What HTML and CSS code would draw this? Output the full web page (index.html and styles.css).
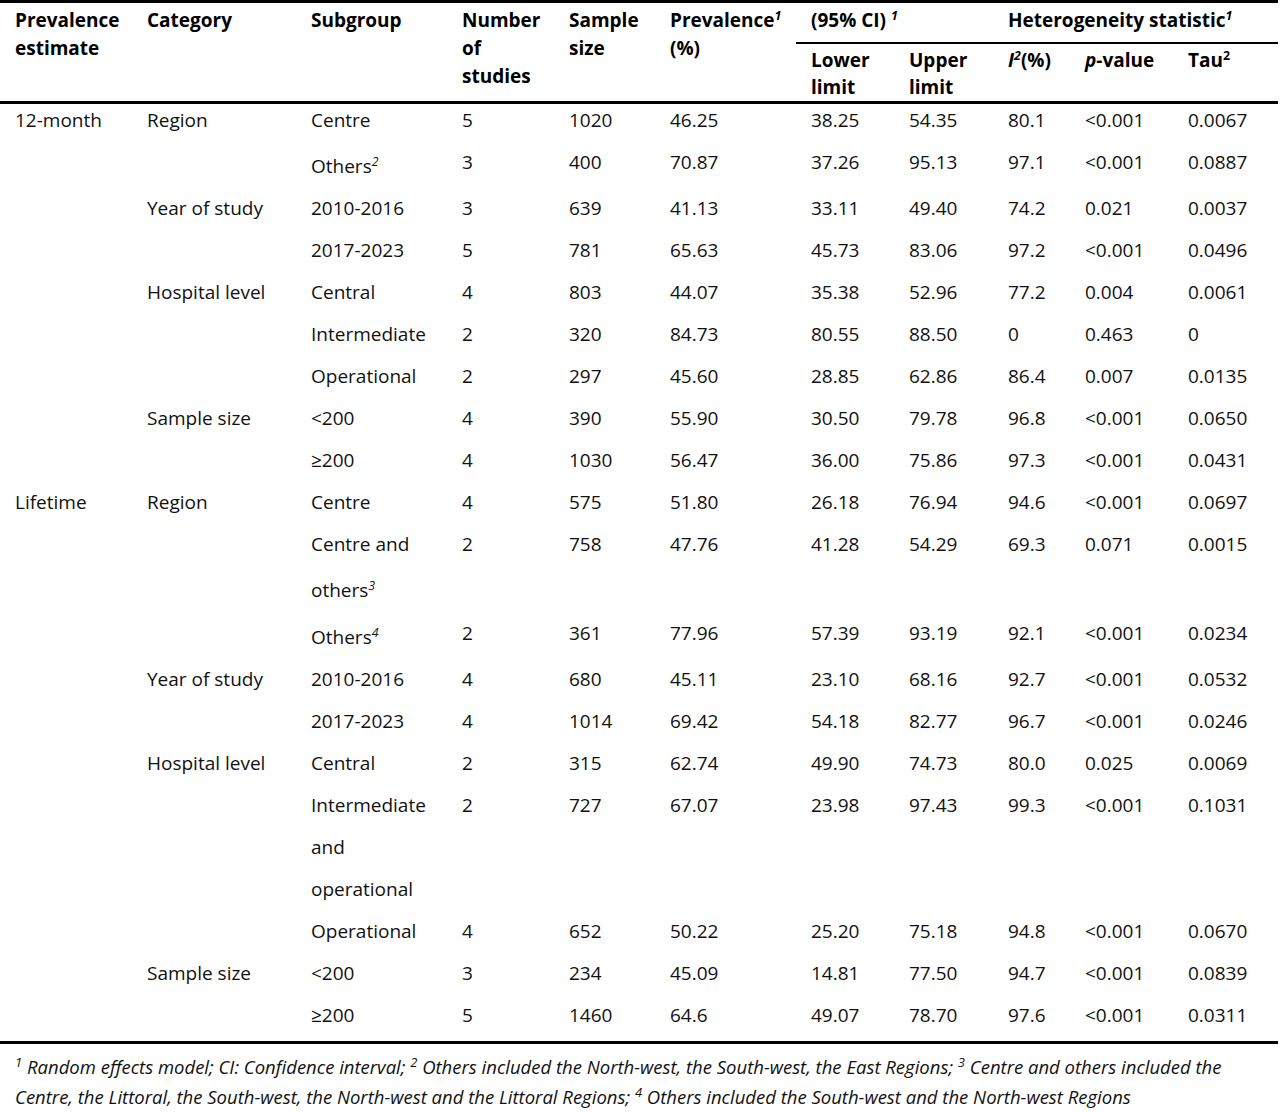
FILE: index.html
```html
<!DOCTYPE html>
<html lang="en">
<head>
    <meta charset="UTF-8">
    <meta name="viewport" content="width=device-width, initial-scale=1.0">
    <title>Subgroup prevalence</title>
    <link rel="stylesheet" href="styles.css">
</head>
<body>
    <table class="prev-table">
        <colgroup>
            <col style="width:132px">
            <col style="width:164px">
            <col style="width:151px">
            <col style="width:107px">
            <col style="width:101px">
            <col style="width:141px">
            <col style="width:98px">
            <col style="width:99px">
            <col style="width:77px">
            <col style="width:103px">
            <col style="width:105px">
        </colgroup>
        <thead>
            <tr class="head-top">
                <th rowspan="2">Prevalence estimate</th>
                <th rowspan="2">Category</th>
                <th rowspan="2">Subgroup</th>
                <th rowspan="2">Number of studies</th>
                <th rowspan="2">Sample size</th>
                <th rowspan="2">Prevalence<sup><i>1</i></sup> (%)</th>
                <th colspan="2" class="group">(95% CI) <sup><i>1</i></sup></th>
                <th colspan="3" class="group">Heterogeneity statistic<sup><i>1</i></sup></th>
            </tr>
            <tr class="head-sub">
                <th>Lower limit</th>
                <th>Upper limit</th>
                <th><i>I</i><sup><i>2</i></sup>(%)</th>
                <th><i>p</i>-value</th>
                <th>Tau<sup>2</sup></th>
            </tr>
        </thead>
        <tbody>
            <tr><td>12-month</td><td>Region</td><td>Centre</td><td>5</td><td>1020</td><td>46.25</td><td>38.25</td><td>54.35</td><td>80.1</td><td>&lt;0.001</td><td>0.0067</td></tr>
            <tr><td></td><td></td><td>Others<sup><i>2</i></sup></td><td>3</td><td>400</td><td>70.87</td><td>37.26</td><td>95.13</td><td>97.1</td><td>&lt;0.001</td><td>0.0887</td></tr>
            <tr><td></td><td>Year of study</td><td>2010-2016</td><td>3</td><td>639</td><td>41.13</td><td>33.11</td><td>49.40</td><td>74.2</td><td>0.021</td><td>0.0037</td></tr>
            <tr><td></td><td></td><td>2017-2023</td><td>5</td><td>781</td><td>65.63</td><td>45.73</td><td>83.06</td><td>97.2</td><td>&lt;0.001</td><td>0.0496</td></tr>
            <tr><td></td><td>Hospital level</td><td>Central</td><td>4</td><td>803</td><td>44.07</td><td>35.38</td><td>52.96</td><td>77.2</td><td>0.004</td><td>0.0061</td></tr>
            <tr><td></td><td></td><td>Intermediate</td><td>2</td><td>320</td><td>84.73</td><td>80.55</td><td>88.50</td><td>0</td><td>0.463</td><td>0</td></tr>
            <tr><td></td><td></td><td>Operational</td><td>2</td><td>297</td><td>45.60</td><td>28.85</td><td>62.86</td><td>86.4</td><td>0.007</td><td>0.0135</td></tr>
            <tr><td></td><td>Sample size</td><td>&lt;200</td><td>4</td><td>390</td><td>55.90</td><td>30.50</td><td>79.78</td><td>96.8</td><td>&lt;0.001</td><td>0.0650</td></tr>
            <tr><td></td><td></td><td>&ge;200</td><td>4</td><td>1030</td><td>56.47</td><td>36.00</td><td>75.86</td><td>97.3</td><td>&lt;0.001</td><td>0.0431</td></tr>
            <tr><td>Lifetime</td><td>Region</td><td>Centre</td><td>4</td><td>575</td><td>51.80</td><td>26.18</td><td>76.94</td><td>94.6</td><td>&lt;0.001</td><td>0.0697</td></tr>
            <tr><td></td><td></td><td><div class="wrap">Centre and others<sup><i>3</i></sup></div></td><td>2</td><td>758</td><td>47.76</td><td>41.28</td><td>54.29</td><td>69.3</td><td>0.071</td><td>0.0015</td></tr>
            <tr><td></td><td></td><td>Others<sup><i>4</i></sup></td><td>2</td><td>361</td><td>77.96</td><td>57.39</td><td>93.19</td><td>92.1</td><td>&lt;0.001</td><td>0.0234</td></tr>
            <tr><td></td><td>Year of study</td><td>2010-2016</td><td>4</td><td>680</td><td>45.11</td><td>23.10</td><td>68.16</td><td>92.7</td><td>&lt;0.001</td><td>0.0532</td></tr>
            <tr><td></td><td></td><td>2017-2023</td><td>4</td><td>1014</td><td>69.42</td><td>54.18</td><td>82.77</td><td>96.7</td><td>&lt;0.001</td><td>0.0246</td></tr>
            <tr><td></td><td>Hospital level</td><td>Central</td><td>2</td><td>315</td><td>62.74</td><td>49.90</td><td>74.73</td><td>80.0</td><td>0.025</td><td>0.0069</td></tr>
            <tr><td></td><td></td><td><div class="wrap">Intermediate and operational</div></td><td>2</td><td>727</td><td>67.07</td><td>23.98</td><td>97.43</td><td>99.3</td><td>&lt;0.001</td><td>0.1031</td></tr>
            <tr><td></td><td></td><td>Operational</td><td>4</td><td>652</td><td>50.22</td><td>25.20</td><td>75.18</td><td>94.8</td><td>&lt;0.001</td><td>0.0670</td></tr>
            <tr><td></td><td>Sample size</td><td>&lt;200</td><td>3</td><td>234</td><td>45.09</td><td>14.81</td><td>77.50</td><td>94.7</td><td>&lt;0.001</td><td>0.0839</td></tr>
            <tr><td></td><td></td><td>&ge;200</td><td>5</td><td>1460</td><td>64.6</td><td>49.07</td><td>78.70</td><td>97.6</td><td>&lt;0.001</td><td>0.0311</td></tr>
        </tbody>
    </table>
    <p class="notes">
        <sup>1</sup> Random effects model; CI: Confidence interval; <sup>2</sup> Others included the North-west, the South-west, the East Regions; <sup>3</sup> Centre and others included the<br>
        Centre, the Littoral, the South-west, the North-west and the Littoral Regions; <sup>4</sup> Others included the South-west and the North-west Regions
    </p>
</body>
</html>
```

FILE: styles.css
```css
*{
    margin: 0;
    padding: 0;
    box-sizing: border-box;
}
body{
    background-color: #fff;
    color: #111;
    font-family: "Open Sans", "Noto Sans", sans-serif;
    font-size: 19px;
}
.prev-table{
    width: 1278px;
    table-layout: fixed;
    border-collapse: collapse;
    border-top: 3px solid #000;
    border-bottom: 3px solid #000;
}
.prev-table th{
    text-align: left;
    vertical-align: top;
    font-weight: 700;
    color: #000;
    line-height: 28px;
    padding: 3px 8px 0 15px;
}
.prev-table th sup{
    line-height: 0;
}
.prev-table thead{
    border-bottom: 3px solid #000;
}
.head-top th{
    padding-bottom: 8px;
}
.head-top .group{
    border-bottom: 2px solid #000;
}
.head-sub th{
    line-height: 27px;
    padding-bottom: 0;
}
/* rows: text sits high in a 42px line, like the word layout */
.prev-table td{
    vertical-align: top;
    line-height: 32px;
    padding: 0 8px 10px 15px;
}
.prev-table td .wrap{
    line-height: 42px;
    margin: -5px 0 -5px;
}
sup{
    font-size: 0.65em;
}
.notes{
    font-style: italic;
    font-size: 18.5px;
    line-height: 30px;
    padding: 8px 0 0 15px;
}
.notes sup{
    font-size: 0.7em;
    line-height: 0;
}
```
